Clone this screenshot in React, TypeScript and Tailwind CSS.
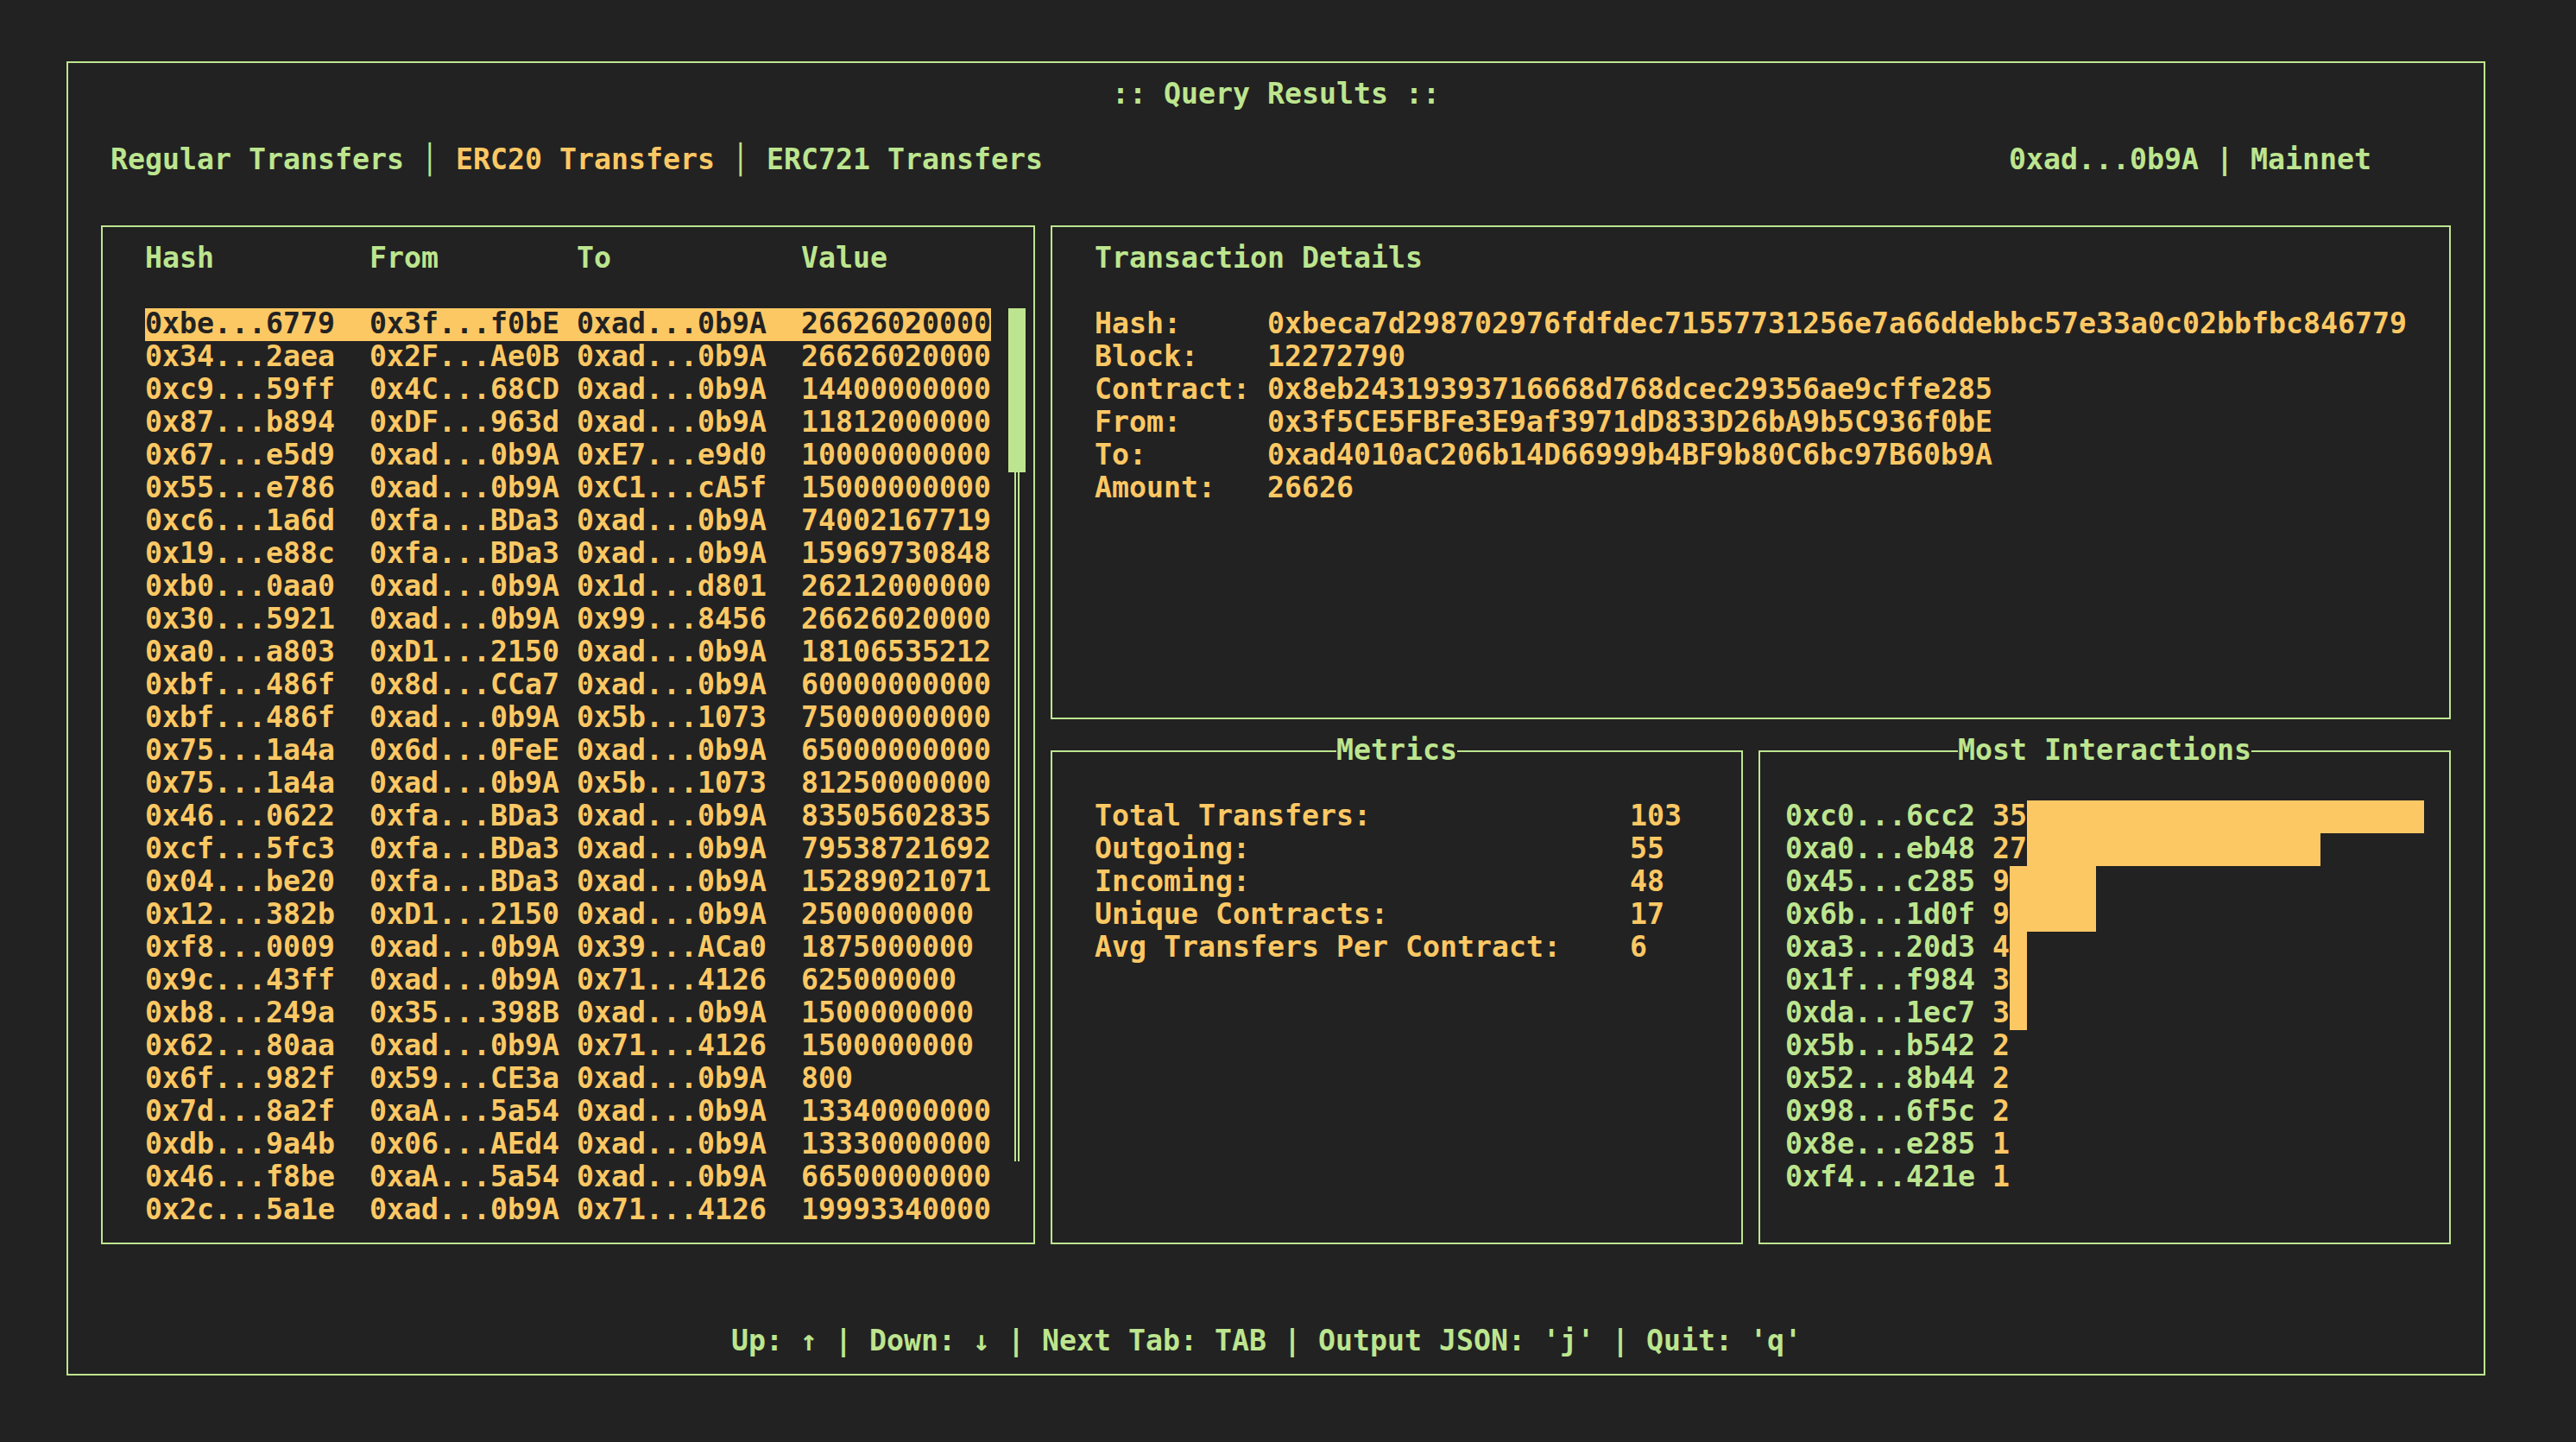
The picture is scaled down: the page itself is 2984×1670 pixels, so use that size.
import React from "react";

const transfers: [string, string, string, string][] = [
    ["0xbe...6779", "0x3f...f0bE", "0xad...0b9A", "26626020000"],
    ["0x34...2aea", "0x2F...Ae0B", "0xad...0b9A", "26626020000"],
    ["0xc9...59ff", "0x4C...68CD", "0xad...0b9A", "14400000000"],
    ["0x87...b894", "0xDF...963d", "0xad...0b9A", "11812000000"],
    ["0x67...e5d9", "0xad...0b9A", "0xE7...e9d0", "10000000000"],
    ["0x55...e786", "0xad...0b9A", "0xC1...cA5f", "15000000000"],
    ["0xc6...1a6d", "0xfa...BDa3", "0xad...0b9A", "74002167719"],
    ["0x19...e88c", "0xfa...BDa3", "0xad...0b9A", "15969730848"],
    ["0xb0...0aa0", "0xad...0b9A", "0x1d...d801", "26212000000"],
    ["0x30...5921", "0xad...0b9A", "0x99...8456", "26626020000"],
    ["0xa0...a803", "0xD1...2150", "0xad...0b9A", "18106535212"],
    ["0xbf...486f", "0x8d...CCa7", "0xad...0b9A", "60000000000"],
    ["0xbf...486f", "0xad...0b9A", "0x5b...1073", "75000000000"],
    ["0x75...1a4a", "0x6d...0FeE", "0xad...0b9A", "65000000000"],
    ["0x75...1a4a", "0xad...0b9A", "0x5b...1073", "81250000000"],
    ["0x46...0622", "0xfa...BDa3", "0xad...0b9A", "83505602835"],
    ["0xcf...5fc3", "0xfa...BDa3", "0xad...0b9A", "79538721692"],
    ["0x04...be20", "0xfa...BDa3", "0xad...0b9A", "15289021071"],
    ["0x12...382b", "0xD1...2150", "0xad...0b9A", "2500000000"],
    ["0xf8...0009", "0xad...0b9A", "0x39...ACa0", "1875000000"],
    ["0x9c...43ff", "0xad...0b9A", "0x71...4126", "625000000"],
    ["0xb8...249a", "0x35...398B", "0xad...0b9A", "1500000000"],
    ["0x62...80aa", "0xad...0b9A", "0x71...4126", "1500000000"],
    ["0x6f...982f", "0x59...CE3a", "0xad...0b9A", "800"],
    ["0x7d...8a2f", "0xaA...5a54", "0xad...0b9A", "13340000000"],
    ["0xdb...9a4b", "0x06...AEd4", "0xad...0b9A", "13330000000"],
    ["0x46...f8be", "0xaA...5a54", "0xad...0b9A", "66500000000"],
    ["0x2c...5a1e", "0xad...0b9A", "0x71...4126", "19993340000"],
];

const details: [string, string][] = [
    ["Hash:", "0xbeca7d298702976fdfdec71557731256e7a66ddebbc57e33a0c02bbfbc846779"],
    ["Block:", "12272790"],
    ["Contract:", "0x8eb24319393716668d768dcec29356ae9cffe285"],
    ["From:", "0x3f5CE5FBFe3E9af3971dD833D26bA9b5C936f0bE"],
    ["To:", "0xad4010aC206b14D66999b4BF9b80C6bc97B60b9A"],
    ["Amount:", "26626"],
];

const metrics: [string, string][] = [
    ["Total Transfers:", "103"],
    ["Outgoing:", "55"],
    ["Incoming:", "48"],
    ["Unique Contracts:", "17"],
    ["Avg Transfers Per Contract:", "6"],
];

// bar = visible width in cells after the value text
const interactions: { addr: string; count: string; bar: number }[] = [
    { addr: "0xc0...6cc2", count: "35", bar: 23 },
    { addr: "0xa0...eb48", count: "27", bar: 17 },
    { addr: "0x45...c285", count: "9", bar: 5 },
    { addr: "0x6b...1d0f", count: "9", bar: 5 },
    { addr: "0xa3...20d3", count: "4", bar: 1 },
    { addr: "0x1f...f984", count: "3", bar: 1 },
    { addr: "0xda...1ec7", count: "3", bar: 1 },
    { addr: "0x5b...b542", count: "2", bar: 0 },
    { addr: "0x52...8b44", count: "2", bar: 0 },
    { addr: "0x98...6f5c", count: "2", bar: 0 },
    { addr: "0x8e...e285", count: "1", bar: 0 },
    { addr: "0xf4...421e", count: "1", bar: 0 },
];

function TitledBox({ title, pad, children }: { title: string; pad: string; children: React.ReactNode }) {
    return (
        <div className="w-[802px] h-[572px] border-2 border-[#bde58f] flex flex-col">
            <div className="-mt-[20px] h-[38px] flex justify-center items-center">
                <span className="bg-[#222222] h-[38px]">{title}</span>
            </div>
            <div className={"mt-[38px] " + pad}>{children}</div>
        </div>
    );
}

export default function App() {
    return (
        <div className="w-[2984px] h-[1670px] bg-[#222222] pt-[71px] pl-[77px] font-['DejaVu_Sans_Mono',monospace] font-bold text-[33.22px] leading-[35px] text-[#bde58f] whitespace-pre overflow-hidden">
            <div className="w-[2802px] h-[1522px] border-2 border-[#bde58f] pt-[18px] pb-[18px] flex flex-col">
                {/* Title */}
                <div className="h-[38px] text-center">:: Query Results ::</div>

                {/* Tabs */}
                <div className="mt-[38px] h-[38px] flex justify-between pl-[49px] pr-[130px]">
                    <div className="flex">
                        <span>Regular Transfers</span>
                        <span className="leading-[38px] -mt-[1px]"> │ </span>
                        <span className="text-[#fcc864]">ERC20 Transfers</span>
                        <span className="leading-[38px] -mt-[1px]"> │ </span>
                        <span>ERC721 Transfers</span>
                    </div>
                    <div>0xad...0b9A | Mainnet</div>
                </div>

                {/* Panels */}
                <div className="mt-[56px] h-[1180px] flex px-[38px] gap-[18px]">
                    {/* Transfers table */}
                    <div className="w-[1082px] h-full border-2 border-[#bde58f] pt-[18px] pl-[49px] flex">
                        <div className="w-[980px]">
                            <div className="flex h-[38px]">
                                <span className="w-[260px]">Hash</span>
                                <span className="w-[240px]">From</span>
                                <span className="w-[260px]">To</span>
                                <span className="w-[220px]">Value</span>
                            </div>
                            <div className="h-[38px]" />
                            {transfers.map((t, i) => (
                                <div
                                    key={i}
                                    className={
                                        i === 0
                                            ? "flex h-[38px] leading-[36px] bg-[#fcc864] text-[#222222]"
                                            : "flex h-[38px] text-[#fcc864]"
                                    }
                                >
                                    <span className="w-[260px]">{t[0]}</span>
                                    <span className="w-[240px]">{t[1]}</span>
                                    <span className="w-[260px]">{t[2]}</span>
                                    <span className="w-[220px]">{t[3]}</span>
                                </div>
                            ))}
                        </div>
                        {/* Scrollbar */}
                        <div className="ml-[20px] w-[20px] mt-[76px] flex flex-col items-center">
                            <div className="w-[20px] h-[190px] bg-[#bde58f]" />
                            <div className="w-[6px] h-[798px] border-l-2 border-r-2 border-[#bde58f]" />
                        </div>
                    </div>

                    {/* Right column */}
                    <div className="w-[1622px] flex flex-col">
                        <div className="h-[572px] border-2 border-[#bde58f] pt-[18px] pl-[49px]">
                            <div className="h-[38px]">Transaction Details</div>
                            <div className="h-[38px]" />
                            {details.map(([k, v]) => (
                                <div key={k} className="flex h-[38px] text-[#fcc864]">
                                    <span className="w-[200px]">{k}</span>
                                    <span>{v}</span>
                                </div>
                            ))}
                        </div>

                        <div className="mt-[36px] flex gap-[18px]">
                            <TitledBox title="Metrics" pad="pl-[49px]">
                                {metrics.map(([k, v]) => (
                                    <div key={k} className="flex h-[38px] text-[#fcc864]">
                                        <span className="w-[620px]">{k}</span>
                                        <span>{v}</span>
                                    </div>
                                ))}
                            </TitledBox>
                            <TitledBox title="Most Interactions" pad="pl-[29px]">
                                {interactions.map((r) => (
                                    <div key={r.addr} className="flex h-[38px]">
                                        <span className="w-[240px]">{r.addr}</span>
                                        <span className="text-[#fcc864]">{r.count}</span>
                                        <div className="h-[38px] bg-[#fcc864]" style={{ width: r.bar * 20 }} />
                                    </div>
                                ))}
                            </TitledBox>
                        </div>
                    </div>
                </div>

                {/* Footer */}
                <div className="mt-[94px] h-[38px] text-center pr-[22px]">
                    Up: ↑ | Down: ↓ | Next Tab: TAB | Output JSON: 'j' | Quit: 'q'
                </div>
            </div>
        </div>
    );
}
